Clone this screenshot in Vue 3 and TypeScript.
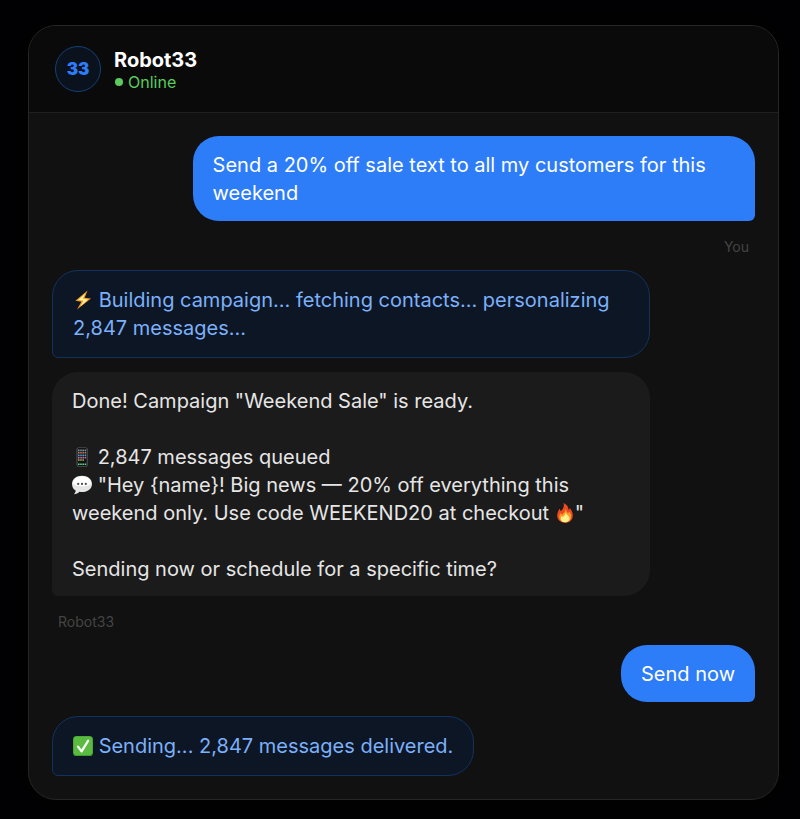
<script setup lang="ts">
type IconName = 'bolt' | 'phone' | 'speech' | 'fire' | 'check'
type Part = string | { icon: IconName; label: string }

interface Message {
  id: number
  kind: 'user' | 'status' | 'bot'
  lines: Part[][]
  author?: string
}

const messages: Message[] = [
  {
    id: 1,
    kind: 'user',
    lines: [['Send a 20% off sale text to all my customers for this weekend']],
    author: 'You',
  },
  {
    id: 2,
    kind: 'status',
    lines: [
      [
        { icon: 'bolt', label: '⚡' },
        ' Building campaign... fetching contacts... personalizing 2,847 messages...',
      ],
    ],
  },
  {
    id: 3,
    kind: 'bot',
    lines: [
      ['Done! Campaign "Weekend Sale" is ready.'],
      [],
      [{ icon: 'phone', label: '📱' }, ' 2,847 messages queued'],
      [
        { icon: 'speech', label: '💬' },
        ' "Hey {name}! Big news — 20% off everything this weekend only. Use code WEEKEND20 at checkout ',
        { icon: 'fire', label: '🔥' },
        '"',
      ],
      [],
      ['Sending now or schedule for a specific time?'],
    ],
    author: 'Robot33',
  },
  { id: 4, kind: 'user', lines: [['Send now']] },
  {
    id: 5,
    kind: 'status',
    lines: [[{ icon: 'check', label: '✅' }, ' Sending... 2,847 messages delivered.']],
  },
]
</script>

<template>
  <main class="page">
    <section class="chat" aria-label="Chat with Robot33">
      <header class="header">
        <div class="avatar">33</div>
        <div class="identity">
          <h1 class="name">Robot33</h1>
          <p class="presence"><span class="dot"></span>Online</p>
        </div>
      </header>

      <div class="messages">
        <template v-for="m in messages" :key="m.id">
          <div class="bubble" :class="m.kind">
            <p v-for="(line, i) in m.lines" :key="i" class="line">
              <template v-for="(part, j) in line" :key="j">
                <template v-if="typeof part === 'string'">{{ part }}</template>
                <svg v-else class="emoji" viewBox="0 0 20 20" role="img" :aria-label="part.label">
                  <g v-if="part.icon === 'bolt'">
                    <path d="M14.6.6 2.4 10.800l6 .9L4 19.600 18 8.600l-6.400-.9z" fill="#f39a1f" />
                    <path d="M12.600 3.200 5 10l5.400.8-3.100 5.600 7.900-7-5.400-.8z" fill="#fff0a0" />
                  </g>
                  <g v-else-if="part.icon === 'phone'">
                    <rect x="4.600" y=".4" width="11" height="19.400" rx="1.800" fill="#626266" />
                    <rect x="5.400" y="1" width="9.400" height="18.200" rx="1.300" fill="#111416" />
                    <g stroke-width="1.600" stroke-dasharray="1.600 .6">
                      <path d="M6 3.400h8.400" stroke="#7d929f" />
                      <path d="M6 5.800h8.400" stroke="#d0764c" />
                      <path d="M6 8.200h8.400" stroke="#4a9bc8" />
                      <path d="M6 10.600h8.400" stroke="#b8749f" />
                      <path d="M6 13h6.200" stroke="#b4a850" />
                      <path d="M6 17.200h8.400" stroke="#5fd685" />
                    </g>
                  </g>
                  <g v-else-if="part.icon === 'speech'">
                    <path
                      d="M10 .8c5.700 0 10 3.400 10 8.100s-4.300 8.100-10 8.100c-.9 0-1.700-.1-2.500-.3-1.400 1.500-3.300 2.500-5.700 2.600 1.200-1 1.800-2.300 1.900-3.700C1.400 14.200 0 11.800 0 8.900 0 4.200 4.300.8 10 .8z"
                      fill="#e6e6e6"
                    />
                    <path
                      d="M10 1.400c5 0 8.700 2.700 9.100 6.500-1.200 4.300-17 4.300-18.200 0C1.300 4.100 5 1.400 10 1.400z"
                      fill="#fff"
                    />
                    <g fill="#4a4a4a">
                      <circle cx="6.200" cy="8.900" r="1.100" />
                      <circle cx="10" cy="8.900" r="1.100" />
                      <circle cx="13.800" cy="8.900" r="1.100" />
                    </g>
                  </g>
                  <g v-else-if="part.icon === 'fire'">
                    <path
                      d="M8.600 0c3.200 1.300 5 4 5.100 7.300.7-.5 1-1.300.9-2.200 2 2 3.200 4.600 3.200 7.400 0 4.400-3.200 7.300-7.700 7.300s-7.900-2.800-7.900-7.200c0-2.800 1.300-4.400 2-6.800.8.6 1.300 1.400 1.500 2.400C8.300 6.300 9.400 3.200 8.600 0z"
                      fill="#ee4a22"
                    />
                    <path
                      d="M10.600 5.500c.4 2.400 1.300 3.600 2.400 4.700.6-.3 1-.8 1.200-1.400 1.400 1.400 2 2.900 1.900 4.600-.1 3.600-2.500 5.900-5.900 5.900-3.500 0-5.900-2.200-5.900-5.500 0-1.600.5-2.700 1.200-3.900.4.800.9 1.300 1.600 1.600 2.300-1.300 3.300-3.500 3.500-6z"
                      fill="#fb9a26"
                    />
                    <path
                      d="M10.300 9.600c.9 1.800 4.200 3.200 4.200 6 0 2.300-1.800 3.700-4.300 3.700s-4.500-1.300-4.500-3.600c0-1.100.4-1.900 1-2.600.4.500.8.800 1.300.9 1.500-.9 2.300-2.500 2.300-4.400z"
                      fill="#fff08a"
                    />
                  </g>
                  <g v-else>
                    <rect width="20" height="20" rx="3.600" fill="#3e9d32" />
                    <rect x=".6" y=".4" width="18.800" height="18.600" rx="3.200" fill="#5abb40" />
                    <path
                      d="M5 10.600 8.600 15.400 15.200 4.600"
                      fill="none"
                      stroke="#fff"
                      stroke-width="2.200"
                      stroke-linecap="round"
                      stroke-linejoin="round"
                    />
                  </g>
                </svg>
              </template>
            </p>
          </div>
          <p v-if="m.author" class="author" :class="m.kind">{{ m.author }}</p>
        </template>
      </div>
    </section>
  </main>
</template>

<style>
body {
  margin: 0;
  background: #020204;
}
</style>

<style scoped>
.page {
  padding: 25px 21px 19px 28px;
  font-family: Inter, "Liberation Sans", sans-serif;
}

.chat {
  border: 1px solid #262626;
  border-radius: 28px;
  background: #111;
  overflow: hidden;
  box-shadow: 0 0 40px #000;
}

.header {
  display: flex;
  align-items: center;
  gap: 13px;
  padding: 20px 26px;
  border-bottom: 1px solid #202020;
  background: #0a0a0a;
}

.avatar {
  display: flex;
  align-items: center;
  justify-content: center;
  box-sizing: border-box;
  width: 46px;
  height: 46px;
  border: 1px solid #15417c;
  border-radius: 50%;
  background: #0a121d;
  color: #2d7cf8;
  font-size: 17px;
  font-weight: 900;
}

.identity {
  padding-top: 2px;
}

.name {
  margin: 0;
  color: #fff;
  font-size: 20px;
  font-weight: 700;
  line-height: 24px;
}

.presence {
  display: flex;
  align-items: center;
  gap: 5px;
  margin: 0;
  color: #5bcb5d;
  font-size: 16px;
  line-height: 20px;
}

.dot {
  width: 8px;
  height: 8px;
  margin-left: 1px;
  border-radius: 50%;
  background: #5bcb5d;
}

.messages {
  display: flex;
  flex-direction: column;
  align-items: flex-start;
  gap: 14px;
  padding: 23px;
}

.bubble {
  box-sizing: border-box;
  max-width: 85%;
  padding: 15px 20px 14px;
  border-radius: 26px;
  font-size: 20px;
  line-height: 28px;
}

.bubble.user {
  align-self: flex-end;
  max-width: 80%;
  border-bottom-right-radius: 6px;
  background: #2d7cf8;
  color: #fff;
}

.bubble.status {
  padding: 15px 20px;
  border: 1px solid #12325e;
  border-bottom-left-radius: 6px;
  background: #0c1625;
  color: #7cb0fa;
}

.bubble.bot {
  padding-bottom: 13px;
  border-bottom-left-radius: 6px;
  background: #1b1b1b;
  color: #e6e6e6;
}

.line {
  min-height: 28px;
  margin: 0;
}

.emoji {
  width: 20px;
  height: 20px;
  vertical-align: -3px;
}

.author {
  margin: 0;
  padding: 3px 6px 0;
  color: #444;
  font-size: 14px;
  line-height: 18px;
}

.author.user {
  align-self: flex-end;
}
</style>
